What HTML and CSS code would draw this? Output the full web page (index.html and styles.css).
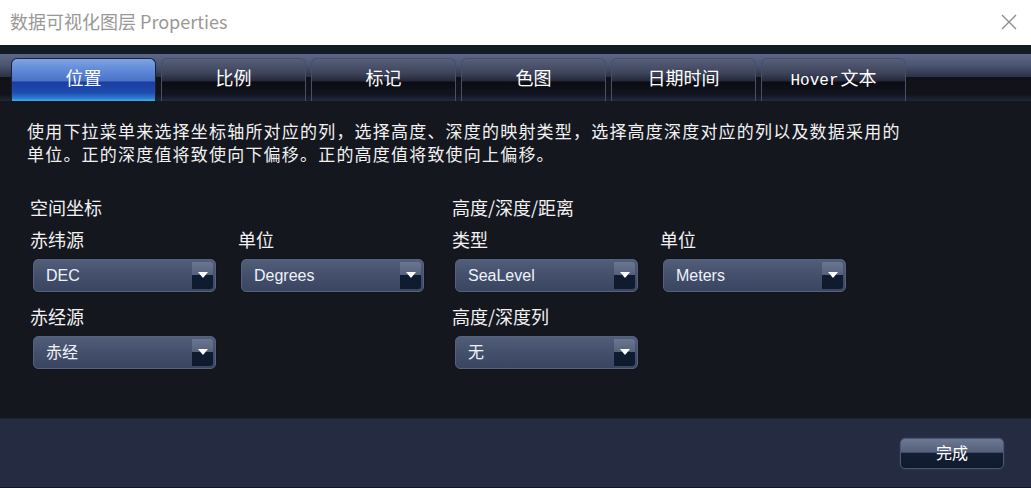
FILE: index.html
```html
<html>
<head>
<meta charset="utf-8">
<title>数据可视化图层 Properties</title>
<link rel="stylesheet" href="styles.css">
</head>
<body>
<div class="window">
    <div class="titlebar">
        <span class="title">数据可视化图层 Properties</span>
        <svg class="close" width="16" height="16" viewBox="0 0 16 16">
            <path d="M1 1 L15 15 M15 1 L1 15" stroke="#8a8a8a" stroke-width="1.3" fill="none"/>
        </svg>
    </div>
    <div class="strip"></div>
    <div class="tabbar">
        <div class="tab active">位置</div>
        <div class="tab">比例</div>
        <div class="tab">标记</div>
        <div class="tab">色图</div>
        <div class="tab">日期时间</div>
        <div class="tab"><span class="mono">Hover</span>文本</div>
    </div>
    <div class="content">
        <p class="desc">使用下拉菜单来选择坐标轴所对应的列，选择高度、深度的映射类型，选择高度深度对应的列以及数据采用的<br>单位。正的深度值将致使向下偏移。正的高度值将致使向上偏移。</p>
        <div class="panes">
            <div class="section">
                <div class="heading">空间坐标</div>
                <div class="row">
                    <div class="field">
                        <div class="label">赤纬源</div>
                        <div class="combo"><span>DEC</span><i class="arrow"></i></div>
                    </div>
                    <div class="field">
                        <div class="label">单位</div>
                        <div class="combo"><span>Degrees</span><i class="arrow"></i></div>
                    </div>
                </div>
                <div class="row second">
                    <div class="field">
                        <div class="label">赤经源</div>
                        <div class="combo"><span>赤经</span><i class="arrow"></i></div>
                    </div>
                </div>
            </div>
            <div class="section">
                <div class="heading">高度/深度/距离</div>
                <div class="row">
                    <div class="field">
                        <div class="label">类型</div>
                        <div class="combo"><span>SeaLevel</span><i class="arrow"></i></div>
                    </div>
                    <div class="field">
                        <div class="label">单位</div>
                        <div class="combo"><span>Meters</span><i class="arrow"></i></div>
                    </div>
                </div>
                <div class="row second">
                    <div class="field">
                        <div class="label">高度/深度列</div>
                        <div class="combo"><span>无</span><i class="arrow"></i></div>
                    </div>
                </div>
            </div>
        </div>
    </div>
    <div class="footer">
        <button class="done">完成</button>
    </div>
</div>
</body>
</html>
```

FILE: styles.css
```css
body
{
    margin: 0;
    background-color: #15171f;
    font-family: "Noto Sans CJK SC", "Liberation Sans", sans-serif;
}
.window
{
    width: 1031px;
    height: 488px;
    display: flex;
    flex-direction: column;
    overflow: hidden;
}
.titlebar
{
    height: 45px;
    background-color: #ffffff;
    display: flex;
    align-items: center;
    justify-content: space-between;
    padding: 0 14px 0 10px;
    box-sizing: border-box;
}
.title
{
    font-size: 18px;
    color: #9a9896;
    line-height: 45px;
    margin-top: -2px;
}
.close
{
    margin-top: -2px;
}
.strip
{
    height: 9px;
    background-color: #131c25;
}
.tabbar
{
    height: 47px;
    display: flex;
    align-items: flex-end;
    gap: 5px;
    padding-left: 11px;
    background: linear-gradient(#5e6788 0, #4a5370 25%, #2c3246 48%, #101218 50%, #111319 85%, #1f2638 100%);
}
.tab
{
    width: 145px;
    height: 43px;
    box-sizing: border-box;
    border: 1px solid #465069;
    border-bottom: none;
    border-radius: 6px 6px 0 0;
    background: linear-gradient(#575f7a 0, #3c4258 35%, #23283a 52%, #0b0c11 55%, #121521 85%, #222b40 100%);
    color: #ffffff;
    font-size: 18px;
    text-align: center;
    line-height: 37px;
}
.tab.active
{
    border-color: #1a2236;
    background: linear-gradient(#7ea4e4 0, #5c86d6 30%, #4a72c6 52%, #1a3ea0 55%, #1e4cae 80%, #2b7ad2 93%, #3cb0e8 100%);
}
.mono
{
    font-family: "Liberation Mono", monospace;
    font-size: 16px;
    margin-right: 2px;
}
.content
{
    height: 317px;
    background-color: #15171f;
    color: #f2f2f2;
}
.desc
{
    margin: 0;
    padding: 18px 0 0 27px;
    font-size: 17px;
    letter-spacing: 1.2px;
    line-height: 23px;
}
.panes
{
    display: grid;
    grid-template-columns: 422px 1fr;
    padding-left: 30px;
    margin-top: 26px;
}
.heading, .label
{
    font-size: 18px;
    line-height: 32px;
}
.row
{
    display: flex;
}
.row.second
{
    margin-top: 8px;
}
.field
{
    width: 208px;
}
.combo
{
    position: relative;
    width: 183px;
    height: 33px;
    margin: 4px 0 0 3px;
    box-sizing: border-box;
    border: 1px solid #56617e;
    border-radius: 5px;
    background: linear-gradient(#525d7a 0, #444f6c 50%, #3a4562 100%);
    box-shadow: 0 0 1px #0a0c12;
    font-family: "Liberation Sans", "Noto Sans CJK SC", sans-serif;
    font-size: 16px;
    line-height: 32px;
    color: #eef2fa;
    padding-left: 12px;
}
.arrow
{
    position: absolute;
    right: 2px;
    top: 2px;
    width: 21px;
    height: 27px;
    border-radius: 0 3px 3px 0;
    background: linear-gradient(#6a7590 0, #56617c 48%, #0f1b30 50%, #0f1a2d 100%);
}
.arrow::after
{
    content: "";
    position: absolute;
    left: 6px;
    top: 10px;
    border-left: 5px solid transparent;
    border-right: 5px solid transparent;
    border-top: 6px solid #ffffff;
}
.footer
{
    height: 69px;
    background-color: #252c42;
    border-top: 1px solid #1e2334;
    box-sizing: border-box;
    display: flex;
    justify-content: flex-end;
    padding: 19px 27px 0 0;
}
.done
{
    width: 104px;
    height: 31px;
    border: 1px solid #4b5672;
    border-radius: 5px;
    background: linear-gradient(#6d7893 0, #55607a 45%, #131e34 50%, #0f1a2e 100%);
    box-shadow: 0 0 2px #39445e;
    color: #ffffff;
    font-family: "Noto Sans CJK SC", sans-serif;
    font-size: 16px;
    line-height: 26px;
    padding: 0 0 3px 0;
}
```
